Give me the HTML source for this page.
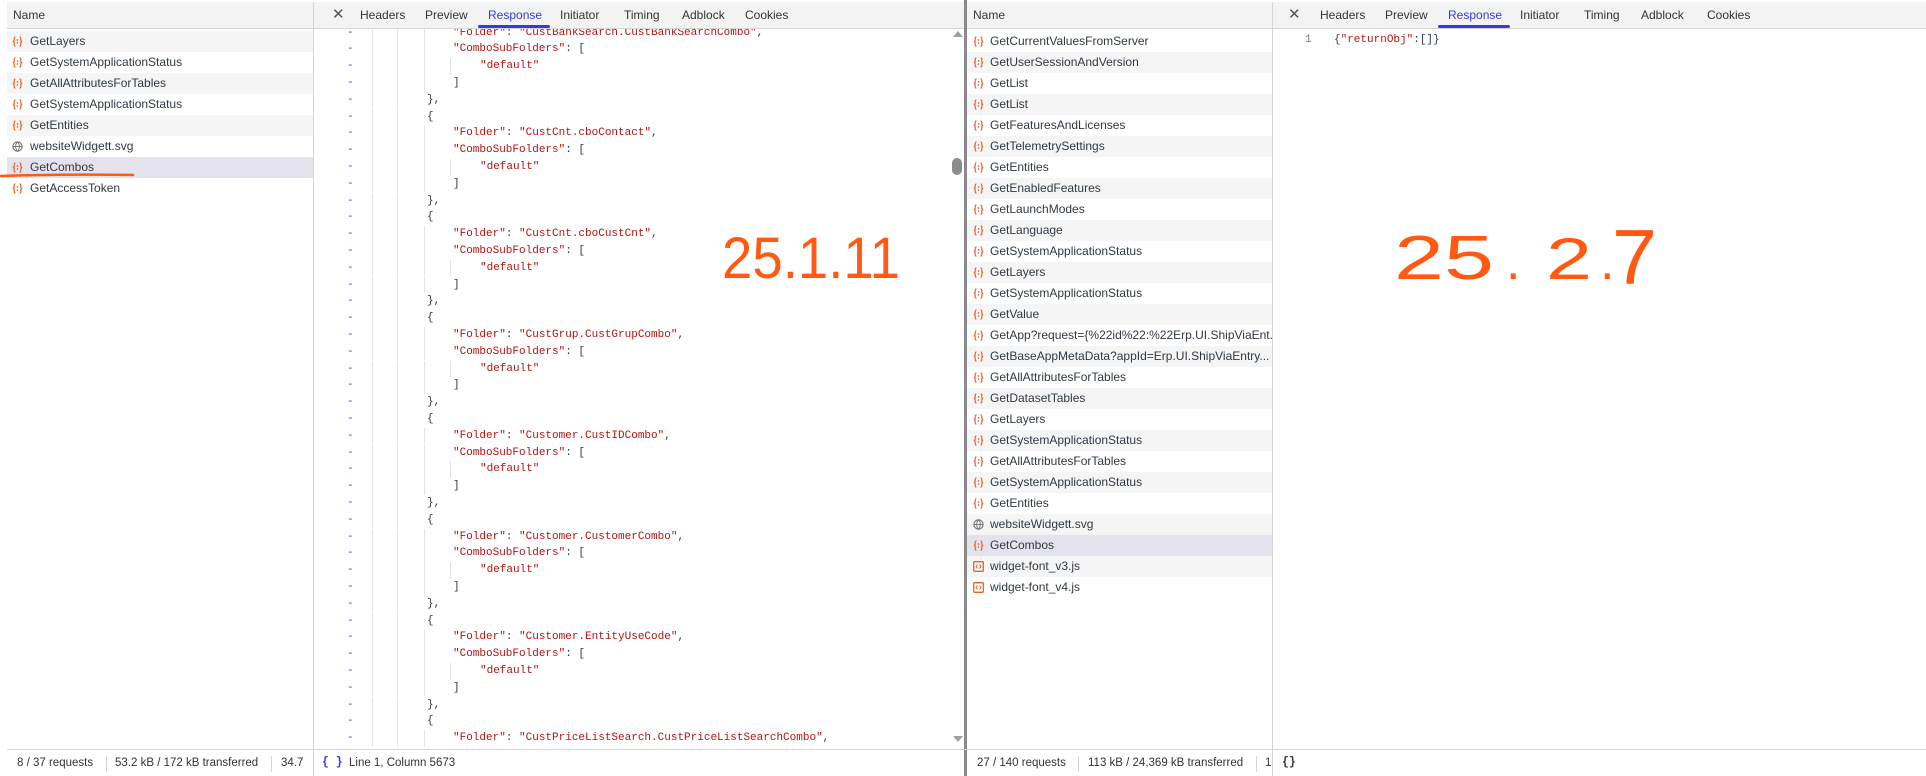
<!DOCTYPE html>
<html><head><meta charset="utf-8">
<style>
*{margin:0;padding:0;box-sizing:border-box}
body{width:1926px;height:776px;position:relative;overflow:hidden;background:#fff;font-family:"Liberation Sans",sans-serif;font-size:12px;color:#303942}
.abs{position:absolute}
.hdr{position:absolute;top:2px;height:27px;background:#f3f3f3;border-bottom:1px solid #d6d6d6}
.row{position:absolute;height:21px;line-height:21px;white-space:nowrap;overflow:hidden}
.row.g{background:#f5f5f5}
.row.sel{background:#e4e2ec}
.ic{position:absolute;top:5px;width:11px;height:11px}
.tab{position:absolute;top:8px;font-size:12px;color:#333;white-space:nowrap}
.tab.act{color:#3a3ad8}
.ul{position:absolute;top:25px;height:3px;background:#3a3ad8;border-radius:2px}
.code{font-family:"Liberation Mono",monospace;font-size:11px}
.ln{position:absolute;height:16.8px;line-height:16.8px;white-space:pre}
.s{color:#b31412}
.dash{position:absolute;color:#3b50ce;font-family:"Liberation Mono",monospace;font-size:11px}
.guide{position:absolute;width:1px;background:#e3e3e3}
.foot{position:absolute;top:750px;height:26px;line-height:26px;font-size:11.5px;color:#333;white-space:nowrap}
.sep{position:absolute;top:756px;width:1px;height:16px;background:#d6d6d6}
</style></head><body>

<div class="hdr" style="left:7px;width:1919px"></div>
<div class="abs" style="left:313px;top:2px;width:1px;height:748px;background:#d6d6d6"></div>
<div class="abs" style="left:1272px;top:2px;width:1px;height:748px;background:#d6d6d6"></div>
<div class="abs" style="left:964px;top:0;width:3px;height:776px;background:#8a8a8a"></div>

<div class="abs" style="left:13px;top:8px">Name</div>
<div id="leftlist"></div>

<div class="tab" style="left:332px;top:5px;font-size:15px;color:#555">✕</div>
<div class="tab" style="left:360px">Headers</div>
<div class="tab" style="left:425px">Preview</div>
<div class="tab act" style="left:488px">Response</div>
<div class="ul" style="left:478px;width:72px"></div>
<div class="tab" style="left:560px">Initiator</div>
<div class="tab" style="left:624px">Timing</div>
<div class="tab" style="left:682px">Adblock</div>
<div class="tab" style="left:745px">Cookies</div>

<div class="abs" style="left:314px;top:29px;width:636px;height:720px;overflow:hidden" id="codebox"></div>

<div class="abs" style="left:953px;top:31px;width:0;height:0;border-left:5px solid transparent;border-right:5px solid transparent;border-bottom:6px solid #a0a0a0"></div>
<div class="abs" style="left:952px;top:158px;width:10px;height:17px;border-radius:5px;background:#8c8c8c"></div>
<div class="abs" style="left:953px;top:736px;width:0;height:0;border-left:5px solid transparent;border-right:5px solid transparent;border-top:6px solid #a0a0a0"></div>

<div class="abs" style="left:973px;top:8px">Name</div>
<div id="rightlist"></div>

<div class="tab" style="left:1288px;top:5px;font-size:15px;color:#555">✕</div>
<div class="tab" style="left:1320px">Headers</div>
<div class="tab" style="left:1385px">Preview</div>
<div class="tab act" style="left:1448px">Response</div>
<div class="ul" style="left:1438px;width:72px"></div>
<div class="tab" style="left:1520px">Initiator</div>
<div class="tab" style="left:1584px">Timing</div>
<div class="tab" style="left:1641px">Adblock</div>
<div class="tab" style="left:1707px">Cookies</div>
<div class="abs code" style="left:1305px;top:34px;color:#777">1</div>
<div class="abs code" style="left:1334px;top:34px">{<span class="s">"returnObj"</span>:[]}</div>

<div class="abs" style="left:7px;top:749px;width:1919px;height:1px;background:#d6d6d6"></div>
<div class="foot" style="left:17px">8 / 37 requests</div>
<div class="sep" style="left:106px"></div>
<div class="foot" style="left:115px">53.2 kB / 172 kB transferred</div>
<div class="sep" style="left:271px"></div>
<div class="foot" style="left:281px">34.7</div>
<div class="abs" style="left:313px;top:750px;width:1px;height:26px;background:#d6d6d6"></div>
<div class="foot" style="left:322px;color:#3a3ad8;font-weight:bold;font-family:'Liberation Mono',monospace">{ }</div>
<div class="foot" style="left:349px">Line 1, Column 5673</div>

<div class="foot" style="left:977px">27 / 140 requests</div>
<div class="sep" style="left:1078px"></div>
<div class="foot" style="left:1088px">113 kB / 24,369 kB transferred</div>
<div class="sep" style="left:1256px"></div>
<div class="foot" style="left:1265px">1</div>
<div class="abs" style="left:1272px;top:750px;width:1px;height:26px;background:#d6d6d6"></div>
<div class="foot" style="left:1282px;font-weight:bold;font-family:'Liberation Mono',monospace">{}</div>

<svg class="abs" style="left:0;top:0" width="1926" height="776">
<path d="M1 176 Q60 174 133 175" stroke="#ff5a14" stroke-width="2.5" fill="none" stroke-linecap="round"/>
<text x="722" y="278" font-family="Liberation Sans" font-size="58" fill="#ff5a14" textLength="178" lengthAdjust="spacingAndGlyphs">25.1.11</text>
<text x="1394" y="279" font-family="Liberation Sans" font-size="62" fill="#ff5a14" textLength="100" lengthAdjust="spacingAndGlyphs">25</text>
<text x="1506" y="279" font-family="Liberation Sans" font-size="52" fill="#ff5a14">.</text>
<text x="1546" y="279" font-family="Liberation Sans" font-size="58" fill="#ff5a14" textLength="46" lengthAdjust="spacingAndGlyphs">2</text>
<text x="1600" y="279" font-family="Liberation Sans" font-size="52" fill="#ff5a14">.</text>
<text x="1612" y="284" font-family="Liberation Sans" font-size="78" fill="#ff5a14" textLength="45" lengthAdjust="spacingAndGlyphs">7</text>
</svg>

<script>
function icon(type){
 if(type==='g') return '<svg class="ic" viewBox="0 0 11 11"><circle cx="5.5" cy="5.5" r="4.6" fill="none" stroke="#777" stroke-width="1.2"/><path d="M1 5.5H10M5.5 1C3 3.5 3 7.5 5.5 10M5.5 1C8 3.5 8 7.5 5.5 10" stroke="#777" stroke-width="0.9" fill="none"/></svg>';
 if(type==='j') return '<svg class="ic" viewBox="0 0 11 11"><rect x="0.7" y="0.7" width="9.6" height="9.6" rx="1" fill="none" stroke="#e8622a" stroke-width="1.3"/><path d="M4.5 3.5L3 5.5L4.5 7.5M6.5 3.5L8 5.5L6.5 7.5" stroke="#e8622a" stroke-width="1" fill="none"/></svg>';
 return '<svg class="ic" viewBox="0 0 11 11"><path d="M3.5 0.8C2 0.8 2.2 2.5 2.2 3.8S1.8 5.5 0.8 5.5C1.8 5.5 2.2 6 2.2 7.2S2 10.2 3.5 10.2M7.5 0.8C9 0.8 8.8 2.5 8.8 3.8S9.2 5.5 10.2 5.5C9.2 5.5 8.8 6 8.8 7.2S9 10.2 7.5 10.2" stroke="#e8622a" stroke-width="1.2" fill="none"/><circle cx="5.5" cy="4" r="0.9" fill="#e8622a"/><path d="M5.6 6.2L5.1 7.8" stroke="#e8622a" stroke-width="1.1"/></svg>';
}
function list(el,items,x0,w,startGrey,iconX,textX,selIdx){
 var h='';
 items.forEach(function(it,i){
  var n=it,t='x';
  if(typeof it!=='string'){n=it[0];t=it[1];}
  var cls='row'+((i%2===0)===startGrey?' g':'')+(i===selIdx?' sel':'');
  h+='<div class="'+cls+'" style="left:'+x0+'px;width:'+w+'px;top:'+(31+i*21)+'px">'+'<div style="position:absolute;left:'+iconX+'px;top:0;width:11px;height:21px">'+icon(t)+'</div><span style="position:absolute;left:'+textX+'px">'+n+'</span></div>';
 });
 document.getElementById(el).innerHTML=h;
}
list('leftlist',['GetLayers','GetSystemApplicationStatus','GetAllAttributesForTables','GetSystemApplicationStatus','GetEntities',['websiteWidgett.svg','g'],'GetCombos','GetAccessToken'],7,306,true,5,23,6);
list('rightlist',['GetCurrentValuesFromServer','GetUserSessionAndVersion','GetList','GetList','GetFeaturesAndLicenses','GetTelemetrySettings','GetEntities','GetEnabledFeatures','GetLaunchModes','GetLanguage','GetSystemApplicationStatus','GetLayers','GetSystemApplicationStatus','GetValue','GetApp?request={%22id%22:%22Erp.UI.ShipViaEnt...','GetBaseAppMetaData?appId=Erp.UI.ShipViaEntry...','GetAllAttributesForTables','GetDatasetTables','GetLayers','GetSystemApplicationStatus','GetAllAttributesForTables','GetSystemApplicationStatus','GetEntities',['websiteWidgett.svg','g'],'GetCombos',['widget-font_v3.js','j'],['widget-font_v4.js','j']],967,305,false,6,23,24);

var folders=['CustBankSearch.CustBankSearchCombo','CustCnt.cboContact','CustCnt.cboCustCnt','CustGrup.CustGrupCombo','Customer.CustIDCombo','Customer.CustomerCombo','Customer.EntityUseCode','CustPriceListSearch.CustPriceListSearchCombo'];
var lines=[];
folders.forEach(function(f,i){
 if(i>0){lines.push(['{',427,0]);}
 lines.push(['<span class="s">"Folder"</span>: <span class="s">"'+f+'"</span>,',453,1]);
 if(i<7){
 lines.push(['<span class="s">"ComboSubFolders"</span>: [',453,1]);
 lines.push(['<span class="s">"default"</span>',480,2]);
 lines.push([']',453,1]);
 lines.push(['},',427,0]);
 }
});
var h='',ox=314,oy=29,LH=16.8,top0=24.5-oy;
lines.forEach(function(l,i){
 var y=top0+i*LH;
 h+='<div class="dash" style="left:'+(347-ox)+'px;top:'+y+'px;line-height:16.8px">-</div>';
 h+='<div class="guide" style="left:'+(372-ox)+'px;top:'+y+'px;height:16.8px"></div>';
 h+='<div class="guide" style="left:'+(397-ox)+'px;top:'+y+'px;height:16.8px"></div>';
 if(l[2]>=1)h+='<div class="guide" style="left:'+(424-ox)+'px;top:'+y+'px;height:16.8px"></div>';
 if(l[2]>=2)h+='<div class="guide" style="left:'+(450-ox)+'px;top:'+y+'px;height:16.8px"></div>';
 h+='<div class="ln code" style="left:'+(l[1]-ox)+'px;top:'+y+'px">'+l[0]+'</div>';
});
document.getElementById('codebox').innerHTML=h;
</script>
</body></html>
